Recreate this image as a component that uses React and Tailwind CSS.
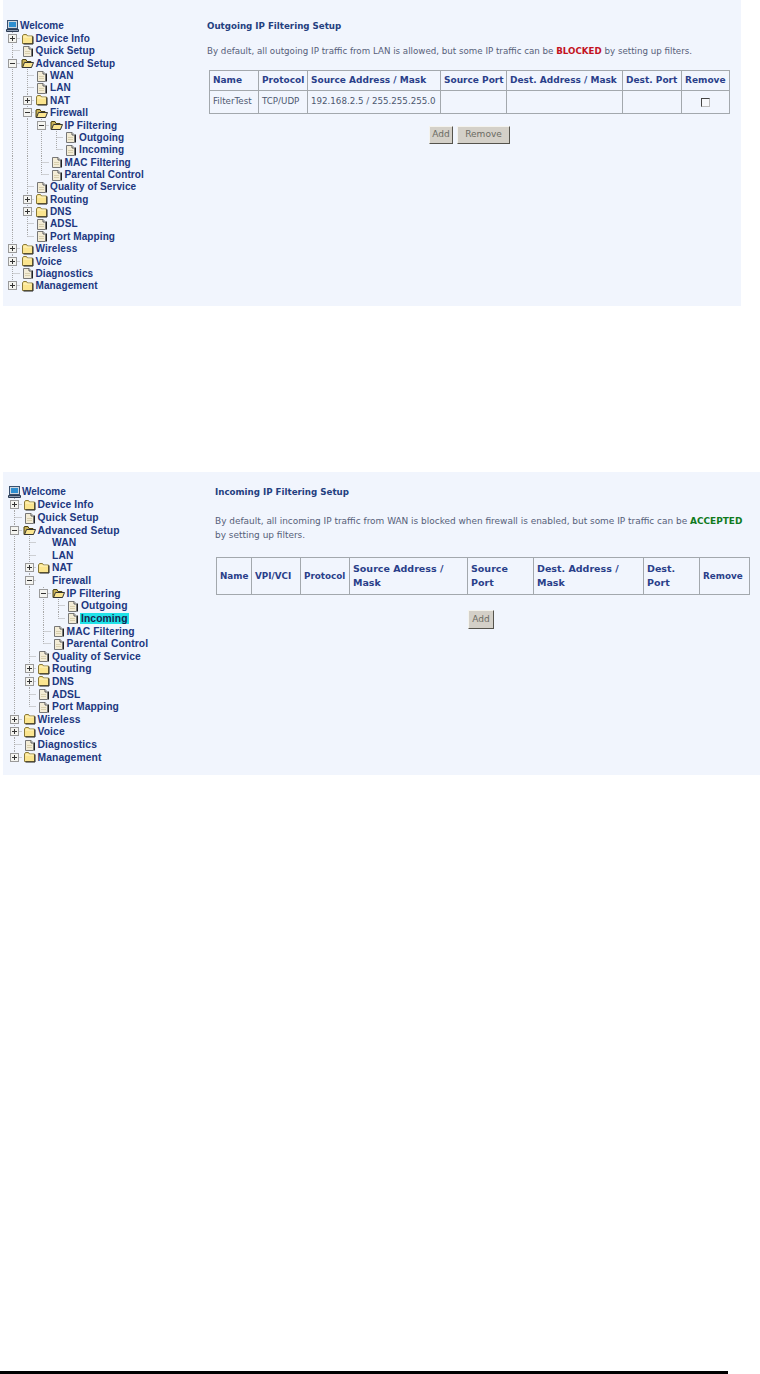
const TREE = [
  { label: 'Device Info', icon: 'folder', closed: true },
  { label: 'Quick Setup', icon: 'page' },
  {
    label: 'Advanced Setup',
    icon: 'open',
    children: [
      { label: 'WAN', icon: 'page', id: 'wan' },
      { label: 'LAN', icon: 'page', id: 'lan' },
      { label: 'NAT', icon: 'folder', closed: true },
      {
        label: 'Firewall',
        icon: 'open',
        id: 'firewall',
        children: [
          {
            label: 'IP Filtering',
            icon: 'open',
            children: [
              { label: 'Outgoing', icon: 'page' },
              { label: 'Incoming', icon: 'page', id: 'incoming' },
            ],
          },
          { label: 'MAC Filtering', icon: 'page' },
          { label: 'Parental Control', icon: 'page' },
        ],
      },
      { label: 'Quality of Service', icon: 'page' },
      { label: 'Routing', icon: 'folder', closed: true },
      { label: 'DNS', icon: 'folder', closed: true },
      { label: 'ADSL', icon: 'page' },
      { label: 'Port Mapping', icon: 'page' },
    ],
  },
  { label: 'Wireless', icon: 'folder', closed: true },
  { label: 'Voice', icon: 'folder', closed: true },
  { label: 'Diagnostics', icon: 'page' },
  { label: 'Management', icon: 'folder', closed: true },
];

function flatten(nodes, guides = []) {
  const rows = [];
  nodes.forEach((node, i) => {
    const last = i === nodes.length - 1;
    rows.push({ ...node, guides, last });
    if (node.children) rows.push(...flatten(node.children, [...guides, !last]));
  });
  return rows;
}

const ROWS = flatten(TREE);

function Guide({ on }) {
  return (
    <svg width="14.5" height="13" className="shrink-0">
      {on && <line x1="7.5" y1="0" x2="7.5" y2="13" stroke="#a8a8a8" strokeDasharray="1 1" />}
    </svg>
  );
}

function Connector({ last, expander }) {
  return (
    <svg width="14.5" height="13" className="shrink-0">
      <line x1="7.5" y1="0" x2="7.5" y2={last ? 6.5 : 13} stroke="#a8a8a8" strokeDasharray="1 1" />
      <line x1="7.5" y1="6.5" x2="15" y2="6.5" stroke="#a8a8a8" strokeDasharray="1 1" />
      {expander && (
        <g>
          <rect x="3.5" y="2.5" width="8" height="8" fill="#f4f4f0" stroke="#9a9a9a" />
          <line x1="5" y1="6.5" x2="10" y2="6.5" stroke="#333" />
          {expander === 'plus' && <line x1="7.5" y1="4" x2="7.5" y2="9" stroke="#333" />}
        </g>
      )}
    </svg>
  );
}

function TreeIcon({ type }) {
  if (type === 'folder')
    return (
      <svg width="13" height="12" viewBox="0 0 13 12" className="shrink-0">
        <path d="M1.5 3V10.5H11.5V3H6.5L5.5 1.5H2.5Z" fill="#fbe58f" stroke="#8a7a3a" />
        <path d="M2.5 4H10.5" stroke="#fff6c8" />
        <path d="M12 3.5V11H2.5" fill="none" stroke="#222" />
      </svg>
    );
  if (type === 'open')
    return (
      <svg width="13" height="12" viewBox="0 0 13 12" className="shrink-0">
        <path d="M1 3V10.5H10V4.5H6L5 2.5H2Z" fill="#c9b257" stroke="#4d4210" />
        <path d="M3.5 5.5H12.5L10.5 10.5H1.5Z" fill="#fbe58f" stroke="#333" />
      </svg>
    );
  return (
    <svg width="13" height="12" viewBox="0 0 13 12" className="shrink-0">
      <path d="M2.5 1.5H8L10.5 4V11.5H2.5Z" fill="#f3ecd6" stroke="#777" />
      <path d="M8 1.5V4H10.5" fill="#fff" stroke="#555" />
      <path d="M11.5 3.5V11.5" stroke="#222" />
      <path d="M4 6.5H9M4 8.5H9" stroke="#d8cfae" />
    </svg>
  );
}

function ComputerIcon() {
  return (
    <svg width="13" height="12" viewBox="0 0 13 12" className="shrink-0">
      <rect x="1.5" y="0.5" width="10" height="8" fill="#cfd6de" stroke="#39506e" />
      <rect x="3" y="2" width="7" height="5" fill="#2f8fd0" />
      <path d="M0.5 9.5H12.5V11.5H0.5Z" fill="#8c9bb0" stroke="#2c3c55" />
    </svg>
  );
}

function Tree({ rowClass, labelClass, hiddenIcons = [], active }) {
  return (
    <div className="w-[100%] font-['Liberation_Sans',sans-serif] font-bold text-[#20377f]">
      <div className={`flex items-center ${rowClass}`}>
        <ComputerIcon />
        <span className="ml-[1px] text-[10px] leading-none">Welcome</span>
      </div>
      {ROWS.map((row) => (
        <div key={row.label} className={`flex items-center ${rowClass}`}>
          <div className="ml-[-1px] flex items-center">
            {row.guides.map((on, i) => (
              <Guide key={i} on={on} />
            ))}
            <Connector
              last={row.last}
              expander={row.closed ? 'plus' : row.icon === 'open' ? 'minus' : null}
            />
            <div className="ml-[1px] w-[13px] shrink-0">
              {!hiddenIcons.includes(row.id) && <TreeIcon type={row.icon} />}
            </div>
          </div>
          <span
            className={`ml-[1px] whitespace-nowrap px-[1px] leading-[11px] ${labelClass} ${
              active && row.id === active ? 'bg-[#21e2e8] text-[#14264f]' : ''
            }`}
          >
            {row.label}
          </span>
        </div>
      ))}
    </div>
  );
}

const thClass =
  'border border-[#a3a8ad] px-[3px] text-left align-middle font-bold text-[#2a3f8a]';
const tdClass = 'border border-[#a3a8ad] px-[3px] text-[8.7px] text-[#4d5870]';
const buttonClass =
  'border border-t-[#f4f3ee] border-l-[#f4f3ee] border-r-[#55534c] border-b-[#55534c] bg-[#d4d0c8] text-[9px] text-[#6a6a62]';

const INCOMING_HEADS = [
  { label: 'Name', size: 'text-[8.8px]' },
  { label: 'VPI/VCI', size: 'text-[8.8px]' },
  { label: 'Protocol', size: 'text-[8.8px]' },
  { label: 'Source Address / Mask', size: 'text-[9.5px]' },
  { label: 'Source Port', size: 'text-[9.5px]' },
  { label: 'Dest. Address / Mask', size: 'text-[9.5px]' },
  { label: 'Dest. Port', size: 'text-[9.5px]' },
  { label: 'Remove', size: 'text-[8.8px]' },
];

export default function App() {
  return (
    <div className="flex min-h-screen flex-col bg-white font-['DejaVu_Sans',sans-serif]">
      {/* outgoing page */}
      <section className="ml-[3px] flex h-[306px] w-[738px] bg-[#f1f5fd] pt-[20px]">
        <div className="w-[204px] shrink-0 pl-[3px]">
          <Tree rowClass="h-[12.36px]" labelClass="text-[10px] tracking-[0.1px]" />
        </div>
        <div className="flex w-[522px] flex-col">
          <h2 className="h-[12px] text-[8.7px] font-bold leading-[12px] text-[#24407f]">
            Outgoing IP Filtering Setup
          </h2>
          <p className="mt-[13px] whitespace-nowrap text-[8.7px] leading-[12px] text-[#566079]">
            By default, all outgoing IP traffic from LAN is allowed, but some IP traffic can be{' '}
            <b className="text-[#c3121f]">BLOCKED</b> by setting up filters.
          </p>
          <table className="mt-[13px] ml-[2px] w-[520px] table-fixed border-collapse">
            <colgroup>
              <col className="w-[49px]" />
              <col className="w-[49px]" />
              <col className="w-[133px]" />
              <col className="w-[66px]" />
              <col className="w-[116px]" />
              <col className="w-[59px]" />
              <col className="w-[48px]" />
            </colgroup>
            <thead>
              <tr className="h-[20px]">
                {['Name', 'Protocol', 'Source Address / Mask', 'Source Port', 'Dest. Address / Mask', 'Dest. Port', 'Remove'].map((h) => (
                  <th key={h} className={`${thClass} whitespace-nowrap text-[9px] leading-[13px]`}>
                    {h}
                  </th>
                ))}
              </tr>
            </thead>
            <tbody>
              <tr className="h-[23px]">
                <td className={tdClass}>FilterTest</td>
                <td className={tdClass}>TCP/UDP</td>
                <td className={`${tdClass} whitespace-nowrap`}>192.168.2.5 / 255.255.255.0</td>
                <td className={tdClass}></td>
                <td className={tdClass}></td>
                <td className={tdClass}></td>
                <td className={tdClass}>
                  <div className="mx-auto h-[9px] w-[9px] border border-t-[#444] border-l-[#444] border-r-[#bbb] border-b-[#bbb] bg-[#f7f8fb]" />
                </td>
              </tr>
            </tbody>
          </table>
          <div className="mt-[12px] ml-[222px] flex gap-[4px]">
            <button className={`${buttonClass} h-[18px] w-[24px]`}>Add</button>
            <button className={`${buttonClass} h-[18px] w-[53px]`}>Remove</button>
          </div>
        </div>
      </section>

      {/* incoming page */}
      <section className="mt-[166px] ml-[3px] flex h-[303px] w-[757px] bg-[#f1f5fd] pt-[14px]">
        <div className="w-[212px] shrink-0 pl-[5px]">
          <Tree rowClass="h-[12.62px]" labelClass="text-[10.3px] tracking-[0.1px]" hiddenIcons={['wan', 'lan', 'firewall']} active="incoming" />
        </div>
        <div className="flex w-[536px] flex-col">
          <h2 className="h-[12px] text-[8.7px] font-bold leading-[12px] text-[#24407f]">
            Incoming IP Filtering Setup
          </h2>
          <p className="mt-[16px] w-[532px] text-[8.95px] leading-[14px] text-[#566079]">
            By default, all incoming IP traffic from WAN is blocked when firewall is enabled, but some IP traffic can be{' '}
            <b className="text-[#0f7a1c]">ACCEPTED</b> by setting up filters.
          </p>
          <table className="mt-[15px] ml-[1px] w-[533px] table-fixed border-collapse">
            <colgroup>
              <col className="w-[35px]" />
              <col className="w-[49px]" />
              <col className="w-[49px]" />
              <col className="w-[118px]" />
              <col className="w-[66px]" />
              <col className="w-[110px]" />
              <col className="w-[56px]" />
              <col className="w-[50px]" />
            </colgroup>
            <thead>
              <tr className="h-[37px]">
                {INCOMING_HEADS.map((h) => (
                  <th key={h.label} className={`${thClass} ${h.size} leading-[14px]`}>
                    {h.label}
                  </th>
                ))}
              </tr>
            </thead>
          </table>
          <div className="mt-[10px] ml-[253px]">
            <button className={`${buttonClass} h-[19px] w-[26px]`}>Add</button>
          </div>
        </div>
      </section>

      {/* page footer rule */}
      <div className="mt-auto h-[3px] w-[728px] bg-black" />
    </div>
  );
}
